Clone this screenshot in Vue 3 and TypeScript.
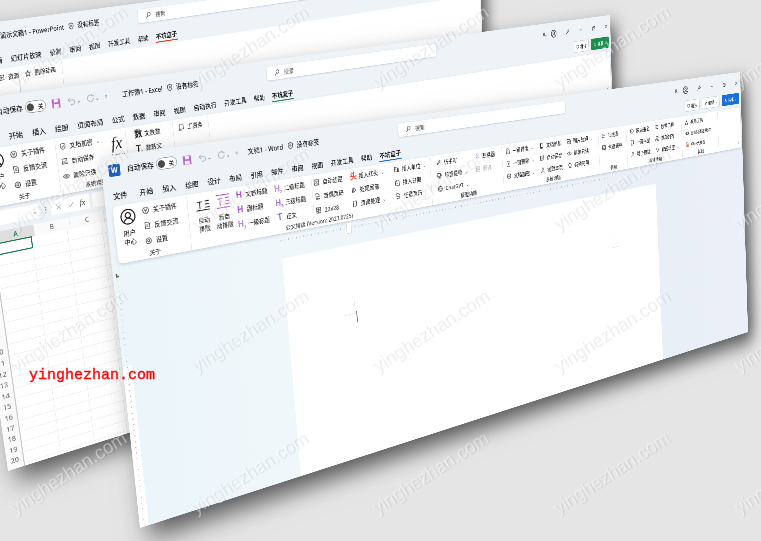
<script setup lang="ts">
type Item = { i?: string; g?: string; sub?: string; t: string; c?: string; caret?: boolean; dim?: boolean; small?: boolean }
type Col = { w: number; big?: string; lines?: string[]; sep?: boolean; items?: Item[] }
type Group = { w: number; label?: string; cols: Col[] }
type Win = {
  key: string
  quad: number[][]
  title: string
  tabs: string[]
  active: string
  buttons: { t: string; i: string; caret?: boolean; primary?: boolean }[]
  lead: number
  groups: Group[]
}

const W = 1600
const H = 640

// maps the flat window onto its four corners on screen
function quadMatrix(q: number[][]): string {
  const [[x0, y0], [x1, y1], [x2, y2], [x3, y3]] = q
  const dx1 = x1 - x2
  const dx2 = x3 - x2
  const sx = x0 - x1 + x2 - x3
  const dy1 = y1 - y2
  const dy2 = y3 - y2
  const sy = y0 - y1 + y2 - y3
  const det = dx1 * dy2 - dx2 * dy1
  const g = (sx * dy2 - dx2 * sy) / det
  const h = (dx1 * sy - sx * dy1) / det
  const a = x1 - x0 + g * x1
  const b = x3 - x0 + h * x3
  const d = y1 - y0 + g * y1
  const e = y3 - y0 + h * y3
  return `matrix3d(${a / W},${d / W},0,${g / W},${b / H},${e / H},0,${h / H},0,0,1,0,${x0},${y0},0,1)`
}

const icons: Record<string, string> = {
  plug: 'M8 2a6 6 0 1 0 .01 0z M6 5v3 M10 5v3 M5 8h6 M8 8v4',
  doc: 'M4 2h6l3 3v9H4z M6.5 7h4 M6.5 10h4',
  gear: 'M8 2.5a5.5 5.5 0 1 0 .01 0z M8 5.8a2.2 2.2 0 1 0 .01 0z',
  shield: 'M8 2l5 2v4c0 3-2 5-5 6-3-1-5-3-5-6V4z M6 8l1.5 1.5L10.5 6.5',
  save: 'M3 3h10v10H3z M5.5 7.5h5 M5.5 10h5',
  eye: 'M1.5 8c2-3 4-4 6.5-4s4.500 1 6.500 4c-2 3-4 4-6.500 4s-4.500-1-6.500-4z M8 6.500a1.500 1.500 0 1 0 .01 0z',
  margin: 'M2.500 2.500h11v11h-11z M5 5l6 6 M11 5l-6 6',
  pages: 'M4 2h5l3 3v4H4z M5 12h7v2H5z',
  grid: 'M3 2.500h10v11H3z M3 6h10 M3 9.500h10 M7 2.500v11',
  tail: 'M4 3v10 M7 3l6 5-6 5z',
  page: 'M4 2h8v9l-3 3H4z',
  date: 'M3 4h10v10H3z M6 2v3 M10 2v3 M6 9h4',
  number: 'M3 3h7v10H3z M11 6h2v7h-2z M5 7h3',
  pen: 'M3 13l1-3 7-7 2 2-7 7z',
  frame: 'M2 3h9v7H2z M5 12h9 M5 14h6 M13 5v5',
  globe: 'M8 2a6 6 0 1 0 .01 0z M2 8h12 M8 2c-3 3-3 9 0 12 M8 2c3 3 3 9 0 12',
  person: 'M8 2.500a2.500 2.500 0 1 0 .01 0z M3.500 14c0-3 2-4.500 4.500-4.500s4.500 1.500 4.500 4.500',
  pic: 'M2.500 3h9v9h-9z M5 14h9V5 M3 10l3-3 3 3',
  omega: 'M3.500 13.500h3v-2a4.500 4.500 0 1 1 3 0v2h3',
  lines: 'M3 4h10 M3 8h10 M3 12h10',
  table: 'M3 3h10v10H3z M3 6.500h10 M3 10h10',
  circle: 'M8 2.500a5.500 5.500 0 1 0 .01 0z M6 8h4',
  align: 'M4 3h8v4H4z M2 10h5v4H2z M9 10h5v4H9z',
  slit: 'M3 3l3 8c.5 2 3.500 2 4 0l3-8',
  tool: 'M8 2a2 2 0 1 0 .01 0z M4 14c0-4 2-7 4-7s4 3 4 7z',
  link: 'M2 8h4 M6 5h8v6H6z',
  fire: 'M4 14V7c0-3 2-5 4-5s4 2 4 5v7h-3V8H7v6z',
  star: 'M7 2l1.500 4H13l-3.500 3 1.500 4.500L7 11l-4 2.500L4.500 9 1 6h4.500z',
  stack: 'M5 2h8v10H5z M3 4v10h8',
  film: 'M3 3h10v10H3z M6 6l4 2-4 2z',
  dots: 'M4 8h.01 M8 8h.01 M12 8h.01'
}

const btnPin = 'M3 3h10v8H8l-3 2.500V11H3z'
const btnShare = 'M4 9v4h8V9 M8 10V3 M5.500 5.500L8 3l2.500 2.500'
const aboutGroup: Group = {
  w: 134,
  label: '关于',
  cols: [
    { w: 50, big: 'user', lines: ['用户', '中心'] },
    {
      w: 84,
      items: [
        { i: 'plug', t: '关于插件' },
        { i: 'doc', t: '反馈交流' },
        { i: 'gear', t: '设置' }
      ]
    }
  ]
}

const windows: Win[] = [
  {
    key: 'ppt',
    quad: [[-192, 47], [480, -42], [487, 222], [-138, 416]],
    title: '演示文稿1 - PowerPoint',
    tabs: ['文件', '开始', '插入', '绘图', '设计', '切换', '动画', '幻灯片放映', '录制', '审阅', '视图', '开发工具', '帮助', '不坑盒子'],
    active: '不坑盒子',
    buttons: [],
    lead: 0,
    groups: [
      { w: 360, cols: [{ w: 318 }, { w: 42, items: [{ i: 'film', t: '资源' }] }] },
      { w: 90, cols: [{ w: 12 }, { w: 78, items: [{ i: 'star', t: '删除动画' }] }] }
    ]
  },
  {
    key: 'excel',
    quad: [[-46, 102], [610, 15], [617, 279], [8, 471]],
    title: '工作簿1 - Excel',
    tabs: ['文件', '开始', '插入', '绘图', '页面布局', '公式', '数据', '审阅', '视图', '自动执行', '开发工具', '帮助', '不坑盒子'],
    active: '不坑盒子',
    buttons: [
      { t: '批注', i: btnPin },
      { t: '共享', i: btnShare, caret: true, primary: true }
    ],
    lead: 20,
    groups: [
      aboutGroup,
      {
        w: 136,
        label: '系统增强',
        cols: [
          { w: 6 },
          {
            w: 90,
            items: [
              { i: 'shield', t: '文档加密', caret: true },
              { i: 'save', t: '自动保存' },
              { i: 'eye', t: '解除只读' }
            ]
          },
          { w: 40, big: 'fx', lines: ['文转公'] }
        ]
      },
      {
        w: 97,
        cols: [
          { w: 17 },
          {
            w: 80,
            items: [
              { g: '数', c: '#222', t: '文数数' },
              { g: 'T', sub: 'r', c: '#222', t: '数转文' }
            ]
          }
        ]
      },
      { w: 76, cols: [{ w: 10 }, { w: 66, items: [{ i: 'stack', t: '工资条' }] }] }
    ]
  },
  {
    key: 'word',
    quad: [[100, 157], [740, 72], [748, 332], [140, 528]],
    title: '文档1 - Word',
    tabs: ['文件', '开始', '插入', '绘图', '设计', '布局', '引用', '邮件', '审阅', '视图', '开发工具', '帮助', '不坑盒子'],
    active: '不坑盒子',
    buttons: [
      { t: '批注', i: btnPin },
      { t: '编辑', i: 'M3 13l1-3 7-7 2 2-7 7z', caret: true },
      { t: '共享', i: btnShare, caret: true, primary: true }
    ],
    lead: 0,
    groups: [
      aboutGroup,
      {
        w: 520,
        label: '公文排版 (Version: 2023.0725)',
        cols: [
          { w: 8 },
          { w: 40, big: 'layout', lines: ['自动', '排版'] },
          { w: 38, big: 'layout-new', lines: ['新自', '动排版'] },
          { w: 6 },
          {
            w: 78,
            items: [
              { g: 'H', c: '#a94fd0', t: '文档标题' },
              { g: 'H', c: '#a94fd0', t: '副标题' },
              { g: 'H', sub: '1', c: '#b98ade', t: '一级标题' }
            ]
          },
          {
            w: 79,
            sep: true,
            items: [
              { g: 'H', sub: '2', c: '#c58be6', t: '二级标题' },
              { g: 'H', sub: '3', c: '#a678e0', t: '三级标题' },
              { g: 'T', c: '#8a5fd6', t: '正文' }
            ]
          },
          { w: 3 },
          {
            w: 80,
            items: [
              { i: 'margin', t: '自动边距' },
              { i: 'pages', t: '奇偶页码' },
              { i: 'grid', t: '22x28' }
            ]
          },
          {
            w: 100,
            items: [
              { g: '头', c: '#e2442b', t: '插入红头', caret: true },
              { i: 'tail', t: '处理尾部' },
              { i: 'page', t: '页面处理', caret: true }
            ]
          },
          {
            w: 88,
            items: [
              { i: 'number', t: '插入单位', caret: true },
              { i: 'date', t: '插入日期' },
              { i: 'pages', t: '任意页码' }
            ]
          }
        ]
      },
      {
        w: 184,
        label: '模型功能',
        cols: [
          { w: 14 },
          {
            w: 98,
            items: [
              { i: 'pen', t: '仿手写' },
              { i: 'frame', t: '标签提稿', caret: true },
              { i: 'globe', t: 'ChatGPT', caret: true }
            ]
          },
          {
            w: 72,
            items: [
              { i: 'person', c: '#a873d8', t: '朗读器' },
              { i: 'grid', t: '翻译', dim: true }
            ]
          }
        ]
      },
      {
        w: 274,
        label: '系统增强',
        cols: [
          { w: 8 },
          {
            w: 93,
            items: [
              { i: 'doc', t: '一键排版', caret: true },
              { i: 'doc', t: '一键删除', caret: true },
              { i: 'shield', t: '文档加密', caret: true }
            ]
          },
          {
            w: 78,
            items: [
              { i: 'stack', c: '#222', t: '文档追加' },
              { i: 'save', t: '自动保存' },
              { i: 'person', t: '提取本页' }
            ]
          },
          {
            w: 95,
            items: [
              { i: 'pic', c: '#222', t: '图片处理', caret: true },
              { i: 'eye', t: '解除只读' },
              { i: 'omega', t: '特殊符号' }
            ]
          }
        ]
      },
      {
        w: 86,
        label: '表格',
        cols: [
          { w: 8 },
          { w: 78, items: [{ i: 'lines', t: '三线表' }, { i: 'table', t: '全选表格' }] }
        ]
      },
      {
        w: 179,
        label: '教师专用',
        cols: [
          { w: 10 },
          {
            w: 80,
            items: [
              { i: 'circle', t: '按表重名' },
              { i: 'page', t: '一键抠图' },
              { i: 'person', t: '格子模版' }
            ]
          },
          {
            w: 89,
            items: [
              { i: 'lines', t: '数学口算' },
              { i: 'align', t: '选项对齐' },
              { i: 'slit', t: '校园填空', caret: true }
            ]
          }
        ]
      },
      {
        w: 126,
        label: '其他',
        cols: [
          { w: 10 },
          {
            w: 116,
            items: [
              { i: 'tool', t: '教师工具' },
              { i: 'link', t: '图标同图还原SPI', small: true },
              { i: 'fire', c: '#d9442c', t: 'Glok大模型', small: true }
            ]
          }
        ]
      }
    ]
  }
]

const rowNumbers = Array.from({ length: 21 }, (_, n) => n + 1)
const columnNames = ['A', 'B', 'C', 'D', 'E', 'F', 'G', 'H', 'I', 'J']
const marks = Array.from({ length: 20 }, (_, n) => n)
</script>

<template>
  <div class="desk">
    <div class="stack">
      <section
        v-for="win in windows"
        :key="win.key"
        class="win"
        :class="`win-${win.key}`"
        :style="{ transform: quadMatrix(win.quad) }"
      >
        <header class="titlebar">
          <div class="quick">
            <span class="logo"><span>W</span></span>
            <span class="autosave">自动保存</span>
            <span class="toggle"><i></i>关</span>
            <svg class="ico save" viewBox="0 0 16 16"><path d="M2 2h12v12H2z" fill="#c264cc" /><path d="M5 2.500h6v4H5zM4.500 9h7v4.500h-7z" fill="#fff" /></svg>
            <svg class="ico undo" viewBox="0 0 16 16"><path d="M5.500 3L2.500 6l3 3M3 6h6.500a3.500 3.500 0 0 1 0 7H6" /></svg>
            <span class="mini">⌄</span>
            <svg class="ico undo" viewBox="0 0 16 16"><path d="M11 3.500a5 5 0 1 0 2 4M11 1v3h3" /></svg>
            <span class="mini">⌄</span>
            <svg class="ico pull" viewBox="0 0 16 16"><path d="M5 5h6M5 8l3 3 3-3" /></svg>
          </div>
          <div class="doc">
            <span>{{ win.title }}</span>
            <svg class="ico tag" viewBox="0 0 16 16"><path d="M8 1.500l5 2v5c0 2.500-2 4.500-5 6-3-1.500-5-3.500-5-6v-5zM8 6a1.500 1.500 0 1 0 .01 0z" /></svg>
            <span>没有标签</span>
          </div>
          <div class="search">
            <svg class="ico" viewBox="0 0 16 16"><path d="M10 2a4 4 0 1 1-.01 0zM7 9.500L3 14" /></svg>
            <span>搜索</span>
          </div>
          <div class="win-icons">
            <svg class="ico" viewBox="0 0 16 16"><path d="M6 3a2.500 2.500 0 1 0 .01 0zM2 13c0-3 2-4 4-4s4 1 4 4M12 9l2 4" /></svg>
            <svg class="ico avatar" viewBox="0 0 16 16"><path d="M8 1a7 7 0 1 0 .01 0zM8 4a2.500 2.500 0 1 0 .01 0zM4 13c1-3 2-3.500 4-3.500s3 .5 4 3.500" /></svg>
            <svg class="ico" viewBox="0 0 16 16"><path d="M10 2l4 4-3 1-3 4-3-3 4-3zM5 11l-3 3" /></svg>
            <svg class="ico" viewBox="0 0 16 16"><path d="M4 8h8" /></svg>
            <svg class="ico" viewBox="0 0 16 16"><path d="M3.500 6h7v7h-7zM6 6V3.500h7v7h-2.500" /></svg>
            <svg class="ico" viewBox="0 0 16 16"><path d="M3.500 3.500l9 9M12.500 3.500l-9 9" /></svg>
          </div>
        </header>

        <nav class="tabs">
          <span
            v-for="tab in win.tabs"
            :key="tab"
            class="tab"
            :class="{ active: tab === win.active }"
          >{{ tab }}</span>
          <div class="actions">
            <span
              v-for="btn in win.buttons"
              :key="btn.t"
              class="btn"
              :class="{ primary: btn.primary }"
            >
              <svg class="ico" viewBox="0 0 16 16"><path :d="btn.i" /></svg>
              {{ btn.t }}
              <span v-if="btn.caret" class="mini">⌄</span>
            </span>
          </div>
        </nav>

        <div class="ribbon">
          <div class="lead" :style="{ width: win.lead + 'px' }"></div>
          <div
            v-for="(group, g) in win.groups"
            :key="g"
            class="group"
            :style="{ width: group.w + 'px' }"
          >
            <div class="cols">
              <div
                v-for="(col, c) in group.cols"
                :key="c"
                class="col"
                :class="{ sep: col.sep }"
                :style="{ width: col.w + 'px' }"
              >
                <div v-if="col.big" class="big">
                  <svg v-if="col.big === 'user'" class="big-ico" viewBox="0 0 16 16">
                    <path d="M8 1a7 7 0 1 0 .01 0zM8 4a2.600 2.600 0 1 0 .01 0zM3.500 13c1-2.500 2.500-3.500 4.500-3.500s3.500 1 4.500 3.500" />
                  </svg>
                  <svg v-else-if="col.big === 'layout'" class="big-ico" viewBox="0 0 20 20">
                    <path d="M1 17h18M13 6h6M13 10h6M13 14h6" />
                    <text x="2" y="15" class="big-t">T</text>
                  </svg>
                  <svg v-else-if="col.big === 'layout-new'" class="big-ico purple" viewBox="0 0 20 20">
                    <path d="M1 2h18M1 18h18M13 6h6M13 10h6M13 14h6" />
                    <text x="2" y="15" class="big-t">T</text>
                  </svg>
                  <span v-else class="fx">fx</span>
                  <span v-for="line in col.lines" :key="line" class="big-line">{{ line }}</span>
                </div>
                <template v-else>
                  <div
                    v-for="item in col.items"
                    :key="item.t"
                    class="cell"
                    :class="{ dim: item.dim, small: item.small }"
                  >
                    <svg
                      v-if="item.i"
                      class="ico"
                      viewBox="0 0 16 16"
                      :style="{ color: item.c }"
                    ><path :d="icons[item.i]" /></svg>
                    <span v-else class="glyph" :style="{ color: item.c }">{{ item.g }}<sub v-if="item.sub">{{ item.sub }}</sub></span>
                    <span class="cell-text">{{ item.t }}</span>
                    <span v-if="item.caret" class="mini">⌄</span>
                  </div>
                </template>
              </div>
            </div>
            <div class="group-label">{{ group.label }}</div>
          </div>
          <span class="collapse">⌄</span>
        </div>

        <div v-if="win.key === 'excel'" class="sheet">
          <div class="formula">
            <div class="name-box"><span class="mini">⌄</span></div>
            <span class="kebab">⋮</span>
            <div class="fx-box">
              <svg class="ico" viewBox="0 0 16 16"><path d="M3.500 3.500l9 9M12.500 3.500l-9 9" /></svg>
              <svg class="ico" viewBox="0 0 16 16"><path d="M3 9l3 3 7-8" /></svg>
              <span class="fx-mini">fx</span>
            </div>
            <div class="input"></div>
          </div>
          <div class="col-heads">
            <span class="corner"></span>
            <span v-for="name in columnNames" :key="name" class="col-head" :class="{ on: name === 'A' }">{{ name }}</span>
          </div>
          <div class="rows">
            <div class="row-heads">
              <span v-for="n in rowNumbers" :key="n" class="row-head">{{ n }}</span>
            </div>
            <div class="cells">
              <span class="selected"></span>
            </div>
          </div>
        </div>

        <div v-if="win.key === 'word'" class="doc-body">
          <div class="v-ruler"><i></i></div>
          <div class="h-ruler"><span class="marker"></span></div>
          <div class="sheet-page">
            <span class="crop crop-left"></span>
            <span class="crop crop-right"></span>
            <span class="caret-mark"></span>
          </div>
        </div>
      </section>
    </div>

    <div class="marks">
      <span v-for="m in marks" :key="m" class="mark">yinghezhan.com</span>
    </div>
    <span class="site">yinghezhan.com</span>
  </div>
</template>

<style scoped>
.desk {
  position: relative;
  width: 761px;
  height: 541px;
  overflow: hidden;
  background: #e5e5e5;
  font-family: "Noto Sans", "Noto Sans CJK SC", sans-serif;
}

.stack {
  position: absolute;
  inset: 0;
  overflow: hidden;
  filter: blur(0.4px);
}

.win {
  position: absolute;
  left: 0;
  top: 0;
  width: 1600px;
  height: 640px;
  transform-origin: 0 0;
  display: flex;
  flex-direction: column;
  background: #eef3f8;
  color: #222;
  font-weight: 500;
  box-shadow: 18px 24px 44px rgba(0, 0, 0, 0.62);
}

.win-word {
  --qa-width: 270px;
  --doc-width: 326px;
  --logo-gap: 12px;
  --tabs-pad: 15px;
}

.win-excel {
  --qa-width: 304px;
  --doc-width: 311px;
  --logo-gap: 36px;
  --tabs-pad: 39px;
}

.win-ppt {
  --qa-width: 343px;
  --doc-width: 294px;
  --logo-gap: 62px;
  --tabs-pad: 61px;
}

.ico {
  flex: none;
  width: 14px;
  height: 14px;
  fill: none;
  stroke: currentColor;
  stroke-width: 1.4;
  color: #444;
}

.mini {
  font-size: 10px;
  line-height: 1;
  color: #666;
}

.titlebar {
  flex: none;
  height: 50px;
  display: flex;
  align-items: center;
  font-size: 12px;
}

.quick {
  width: var(--qa-width);
  flex: none;
  display: flex;
  align-items: center;
  padding-left: 12px;
  box-sizing: border-box;
}

.logo {
  flex: none;
  width: 20px;
  height: 20px;
  margin-right: var(--logo-gap);
  border-radius: 3px;
  background: #1d5fc4;
  color: #fff;
  font: 700 12px/20px "Liberation Sans", sans-serif;
  text-align: center;
}

.autosave {
  width: 52px;
  flex: none;
}

.toggle {
  flex: none;
  width: 38px;
  height: 20px;
  box-sizing: border-box;
  border: 1.5px solid #8a8a8a;
  border-radius: 10px;
  display: flex;
  align-items: center;
  justify-content: space-between;
  padding: 0 4px 0 2px;
  font-size: 10px;
  background: #fff;
}

.toggle i {
  width: 13px;
  height: 13px;
  border-radius: 50%;
  background: #4a4a4a;
}

.save {
  width: 20px;
  height: 20px;
  margin-left: 9px;
  stroke: none;
}

.undo {
  width: 18px;
  height: 18px;
  margin-left: 10px;
  color: #b3b3b3;
}

.pull {
  width: 10px;
  height: 10px;
  margin-left: 8px;
  color: #666;
}

.doc {
  width: var(--doc-width);
  flex: none;
  display: flex;
  align-items: center;
  gap: 6px;
}

.tag {
  margin-left: 2px;
}

.search {
  flex: none;
  width: 434px;
  height: 26px;
  box-sizing: border-box;
  padding-left: 16px;
  display: flex;
  align-items: center;
  gap: 10px;
  background: #fff;
  border-radius: 4px;
  box-shadow: 0 1px 3px rgba(90, 110, 140, 0.35);
  color: #777;
  font-size: 11.500px;
}

.win-icons {
  margin-left: auto;
  padding-right: 8px;
  display: flex;
  align-items: center;
}

.win-icons .ico + .ico {
  margin-left: 30px;
}

.win-icons .ico:nth-child(2) {
  margin-left: 14px;
}

.avatar {
  width: 18px;
  height: 18px;
}

.tabs {
  flex: none;
  height: 34px;
  display: flex;
  align-items: center;
  gap: 17px;
  padding-left: var(--tabs-pad);
  font-size: 12.500px;
  color: #222;
}

.tab {
  position: relative;
  white-space: nowrap;
}

.tab:first-child {
  margin-right: 4px;
}

.tab.active {
  font-weight: 700;
  color: #111;
}

.tab.active::after {
  content: "";
  position: absolute;
  left: -1px;
  right: -1px;
  bottom: -3px;
  height: 2px;
  background: #2a6ad0;
}

.win-excel .tab.active::after {
  background: #1f8a55;
}

.win-ppt .tab.active::after {
  background: #d4421f;
}

.actions {
  margin-left: auto;
  margin-bottom: 10px;
  padding-right: 7px;
  display: flex;
  gap: 8px;
}

.btn {
  height: 26px;
  box-sizing: border-box;
  padding: 0 7px;
  display: flex;
  align-items: center;
  gap: 3px;
  font-size: 10.500px;
  background: #fff;
  border: 1.5px solid #c6ccd2;
  border-radius: 3px;
  white-space: nowrap;
}

.btn .ico {
  width: 11px;
  height: 11px;
}

.btn.primary {
  background: #1d6fd8;
  border-color: #1d6fd8;
  color: #fff;
}

.btn.primary .ico,
.btn.primary .mini {
  color: #fff;
}

.win-excel .btn.primary {
  background: #1f8f4e;
  border-color: #1f8f4e;
}

.ribbon {
  position: relative;
  flex: none;
  height: 97px;
  margin: 0 4px 0 12px;
  display: flex;
  background: #fff;
  border-radius: 8px;
  box-shadow: 0 2px 5px rgba(90, 110, 140, 0.3);
  font-size: 11px;
}

.win-ppt .ribbon {
  height: 180px;
  box-shadow: none;
}

.lead {
  flex: none;
}

.group {
  flex: none;
  box-sizing: border-box;
  display: flex;
  flex-direction: column;
  border-right: 1.5px solid #e2e5e9;
  height: 94px;
  margin-top: 2px;
}

.cols {
  flex: none;
  height: 78px;
  display: flex;
}

.col {
  flex: none;
  box-sizing: border-box;
  min-width: 0;
}

.col.sep {
  border-right: 1.5px solid #e2e5e9;
}

.cell {
  height: 26px;
  display: flex;
  align-items: center;
  gap: 6px;
  white-space: nowrap;
}

.cell.dim {
  opacity: 0.35;
}

.cell.small {
  font-size: 9.500px;
}

.cell-text {
  color: #333;
}

.glyph {
  flex: none;
  width: 14px;
  font: 700 16px/1 "Liberation Sans", "Noto Sans CJK SC", sans-serif;
  text-align: center;
  white-space: nowrap;
}

.glyph sub {
  font-size: 9px;
  line-height: 0;
}

.big {
  display: flex;
  flex-direction: column;
  align-items: center;
  padding-top: 5px;
  line-height: 15px;
}

.big-ico {
  width: 28px;
  height: 28px;
  margin-bottom: 6px;
  fill: none;
  stroke: #111;
  stroke-width: 1.1;
}

.big-t {
  font: 400 13px "Liberation Sans", sans-serif;
  fill: currentColor;
  stroke: none;
}

.big-ico.purple {
  stroke: #a43fd0;
  color: #a43fd0;
}

.big-line {
  white-space: nowrap;
  color: #333;
}

.fx {
  font: italic 30px/34px "Liberation Serif", serif;
  color: #222;
}

.group-label {
  height: 16px;
  font-size: 10.500px;
  line-height: 16px;
  text-align: center;
  color: #444;
  white-space: nowrap;
}

.collapse {
  position: absolute;
  right: 6px;
  bottom: 8px;
  font-size: 12px;
  line-height: 1;
  color: #666;
}

.sheet {
  flex: 1;
  min-height: 0;
  overflow: hidden;
  display: flex;
  flex-direction: column;
}

.formula {
  flex: none;
  height: 26px;
  margin: 7px 0 9px 12px;
  display: flex;
  align-items: center;
  gap: 6px;
}

.name-box {
  width: 108px;
  height: 24px;
  display: flex;
  align-items: center;
  justify-content: flex-end;
  padding-right: 4px;
  box-sizing: border-box;
  background: #fff;
}

.kebab {
  font-size: 13px;
  color: #666;
  width: 10px;
  text-align: center;
}

.fx-box {
  width: 74px;
  height: 26px;
  box-sizing: border-box;
  padding: 0 8px;
  display: flex;
  align-items: center;
  justify-content: space-between;
  background: #fff;
  border-radius: 3px;
}

.fx-box .ico {
  color: #aaa;
}

.fx-mini {
  font: italic 15px "Liberation Serif", serif;
  color: #333;
}

.input {
  flex: 1;
  height: 26px;
  background: #fff;
}

.col-heads {
  flex: none;
  height: 20px;
  display: flex;
  background: #fafafa;
  font-size: 12px;
  color: #777;
}

.corner {
  flex: none;
  width: 40px;
}

.col-head {
  flex: none;
  width: 67px;
  box-sizing: border-box;
  line-height: 20px;
  text-align: center;
  border-right: 1px solid #e4e4e4;
}

.col-head.on {
  background: #dedede;
  color: #1d7a4a;
}

.rows {
  flex: 1;
  min-height: 0;
  display: flex;
  background: #fff;
}

.row-heads {
  flex: none;
  width: 30px;
  margin-right: 10px;
  display: flex;
  flex-direction: column;
  border-right: 2px solid #c9c9c9;
  background: #fafafa;
  font-size: 13px;
  color: #777;
}

.row-head {
  flex: none;
  height: 19.600px;
  line-height: 19.600px;
  text-align: center;
}

.cells {
  flex: 1;
  margin-left: -8px;
  position: relative;
  background:
    repeating-linear-gradient(to bottom, transparent 0 18.600px, #ececec 18.600px 19.600px),
    repeating-linear-gradient(to right, transparent 0 66px, #ececec 66px 67px);
}

.selected {
  position: absolute;
  left: -2px;
  top: -1px;
  width: 69px;
  height: 21px;
  box-sizing: border-box;
  border: 2.500px solid #1d7d4b;
}

.doc-body {
  flex: 1;
  min-height: 0;
  display: grid;
  grid-template-columns: 16px 304px 976px 1fr;
  grid-template-rows: 46px 1fr;
  background: linear-gradient(to right, #ebf5fa 0, #f0f7fb 300px, #e9eff6 1300px, #ebf0f8 100%);
}

.v-ruler {
  grid-column: 1;
  grid-row: 1 / 3;
  margin-top: 16px;
  background:
    repeating-linear-gradient(to bottom, #b4b8bc 0 1.500px, transparent 1.500px 10px) 7px 0 / 2px 100% no-repeat,
    linear-gradient(to bottom, transparent 158px, #fff 158px);
}

.v-ruler i {
  display: block;
  width: 6px;
  height: 6px;
  margin-left: 5px;
  background: #666;
  clip-path: polygon(0 0, 45% 0, 45% 55%, 100% 55%, 100% 100%, 0 100%);
}

.h-ruler {
  grid-column: 3;
  grid-row: 1;
  position: relative;
  height: 3px;
  margin: 11px 150px 0 0;
  background: repeating-linear-gradient(to right, #b9bdc2 0 2px, transparent 2px 8px, #dcdfe2 8px 10px, transparent 10px 16px);
}

.marker {
  position: absolute;
  left: 142px;
  top: -9px;
  width: 9px;
  height: 20px;
  background: #fff;
  border: 1px solid #d5d8dc;
}

.sheet-page {
  grid-column: 3;
  grid-row: 2;
  position: relative;
  background: #fff;
}

.crop {
  position: absolute;
  width: 24px;
  height: 24px;
  border: 0 solid #dfe1e4;
}

.crop-left {
  left: 122px;
  top: 107px;
  border-width: 0 1px 1px 0;
}

.crop-right {
  left: 826px;
  top: 99px;
  border-width: 0 0 1px 1px;
}

.caret-mark {
  position: absolute;
  left: 149px;
  top: 128px;
  width: 2px;
  height: 22px;
  background: #777;
}

.marks {
  position: absolute;
  left: -22px;
  top: -24px;
  display: grid;
  grid-template-columns: repeat(5, 181px);
  grid-auto-rows: 142px;
  pointer-events: none;
}

.mark {
  place-self: center;
  transform: rotate(-33deg);
  font: 18.500px "Liberation Sans", sans-serif;
  white-space: nowrap;
  color: rgba(255, 255, 255, 0.42);
  text-shadow: 1px 1px 1px rgba(0, 0, 0, 0.09);
}

.site {
  position: absolute;
  left: 29px;
  top: 367px;
  font: 400 15px/18px "Liberation Mono", monospace;
  color: #f00;
  -webkit-text-stroke: 0.35px #f00;
}
</style>

<style>
body {
  margin: 0;
  background: #e5e5e5;
}
</style>
